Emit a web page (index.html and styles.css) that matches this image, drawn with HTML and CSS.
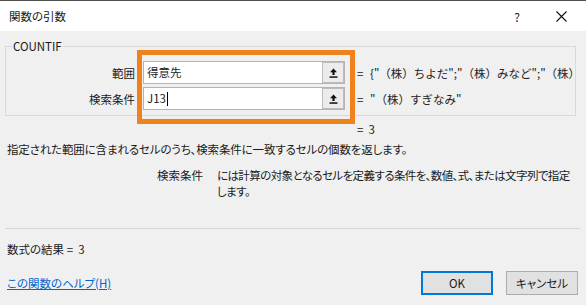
FILE: index.html
```html
<!DOCTYPE html>
<html lang="ja">
<head>
<meta charset="utf-8">
<title>関数の引数</title>
<link rel="stylesheet" href="styles.css">
</head>
<body>
<div class="dialog">
  <header class="titlebar">
    <span class="title">関数の引数</span>
    <span class="help">?</span>
    <span class="close"><svg width="11" height="11" viewBox="0 0 11 11"><path d="M0.5 0.5 L10.5 10.5 M10.5 0.5 L0.5 10.5" stroke="#111" stroke-width="1.1" fill="none"/></svg></span>
  </header>
  <main class="content">
    <fieldset class="group">
      <legend>COUNTIF</legend>
      <div class="args">
        <span class="arg-label">範囲</span>
        <div class="field"><span class="field-text">得意先</span><span class="pick"><svg width="9" height="10" viewBox="0 0 9 10"><path d="M4.5 0.5 L8 4.2 H5.6 V7 H3.4 V4.2 H1 Z" fill="#111"/><rect x="0.5" y="8.3" width="8" height="1.5" fill="#111"/></svg></span></div>
        <span class="eq">=</span>
        <span class="val">{"（株）ちよだ";"（株）みなど";"（株）すぎなみ"}</span>

        <span class="arg-label">検索条件</span>
        <div class="field"><span class="field-text">J13<span class="caret"></span></span><span class="pick"><svg width="9" height="10" viewBox="0 0 9 10"><path d="M4.5 0.5 L8 4.2 H5.6 V7 H3.4 V4.2 H1 Z" fill="#111"/><rect x="0.5" y="8.3" width="8" height="1.5" fill="#111"/></svg></span></div>
        <span class="eq">=</span>
        <span class="val">"（株）すぎなみ"</span>
      </div>
    </fieldset>
    <div class="highlight"></div>
    <div class="total">=&nbsp; 3</div>
    <p class="desc">指定された範囲に含まれるセルのうち、検索条件に一致するセルの個数を返します。</p>
    <div class="argdesc">
      <span class="argname">検索条件</span>
      <span class="argtext">には計算の対象となるセルを定義する条件を、数値、式、または文字列で指定<br>します。</span>
    </div>
    <hr class="sep">
    <div class="result">数式の結果 =&nbsp; 3</div>
    <div class="footer">
      <a class="help-link" href="#">この関数のヘルプ(H)</a>
      <div class="buttons">
        <button class="btn btn-primary" type="button">OK</button>
        <button class="btn" type="button">キャンセル</button>
      </div>
    </div>
  </main>
</div>
</body>
</html>
```

FILE: styles.css
```css
html, body {
  margin: 0;
  padding: 0;
}
body {
  width: 586px;
  height: 305px;
  overflow: hidden;
  background: #f0f0f0;
  font-family: "Noto Sans CJK JP", "Noto Sans", sans-serif;
  font-size: 11.5px;
  color: #1a1a1a;
}
.dialog {
  position: relative;
  height: 305px;
}
.titlebar {
  height: 30px;
  border-top: 1px solid #505050;
  background: #fff;
  display: flex;
  align-items: center;
  padding: 0 18px 0 9px;
}
.title {
  flex: 1;
  font-feature-settings: "palt";
}
.help {
  width: 12px;
  text-align: center;
  font-size: 12px;
  margin-right: 33px;
}
.close {
  width: 12px;
  height: 11px;
  display: flex;
}
.content {
  display: flex;
  flex-direction: column;
}
.group {
  margin: 8px 10px 0 5px;
  padding: 8px 0 5px 0;
  border: 1px solid #d9d9d9;
  min-width: 0;
}
.group legend {
  margin-left: 6px;
  padding: 0 1px;
  line-height: 14px;
}
.args {
  display: grid;
  grid-template-columns: 137px 202px 25px 1fr;
  row-gap: 3px;
  align-items: center;
}
.arg-label {
  text-align: right;
  padding-right: 8px;
  font-feature-settings: "palt";
}
.field {
  height: 23px;
  box-sizing: border-box;
  border: 1px solid #b4b4b4;
  background: #fff;
  display: flex;
  align-items: stretch;
}
.field-text {
  flex: 1;
  padding-left: 3px;
  line-height: 21px;
  display: flex;
  align-items: center;
}
.caret {
  display: inline-block;
  width: 0;
  height: 14px;
  border-left: 1px solid #000;
  margin-left: 1px;
}
.pick {
  width: 20px;
  border: 1px solid #bcbcbc;
  background: #ececec;
  display: flex;
  align-items: center;
  justify-content: center;
}
.eq {
  padding-left: 12px;
}
.val {
  white-space: nowrap;
  overflow: hidden;
  color: #222;
}
.highlight {
  position: absolute;
  left: 137px;
  top: 50px;
  width: 218px;
  height: 74px;
  box-sizing: border-box;
  border: 5px solid #f0821e;
}
.total {
  margin-top: 5px;
  padding-left: 357px;
  line-height: 16px;
}
.desc {
  margin: 4px 0 0 7px;
  line-height: 16px;
  letter-spacing: -0.15px;
  font-feature-settings: "palt";
}
.argdesc {
  margin-top: 10px;
  display: flex;
  gap: 14px;
  padding-left: 157px;
  line-height: 16px;
  font-feature-settings: "palt";
}
.argname {
  flex-shrink: 0;
}
.argtext {
  white-space: nowrap;
  letter-spacing: -0.6px;
}
.sep {
  margin: 29px 6px 0 5px;
  border: 0;
  border-top: 1px solid #d5d5d5;
  height: 0;
}
.result {
  margin-top: 12px;
  padding-left: 7px;
  line-height: 16px;
  font-feature-settings: "palt";
}
.footer {
  margin-top: 14px;
  display: flex;
  align-items: center;
  padding: 0 8px 0 7px;
}
.help-link {
  flex: 1;
  color: #0066cc;
  text-decoration: underline;
  font-feature-settings: "palt";
}
.buttons {
  display: flex;
  gap: 13px;
}
.btn {
  width: 72px;
  height: 24px;
  box-sizing: border-box;
  border: 1px solid #adadad;
  background: #e1e1e1;
  font-family: inherit;
  font-size: 11.5px;
  color: #1a1a1a;
  padding: 0;
  font-feature-settings: "palt";
}
.btn-primary {
  border: 2px solid #0078d7;
}
```
